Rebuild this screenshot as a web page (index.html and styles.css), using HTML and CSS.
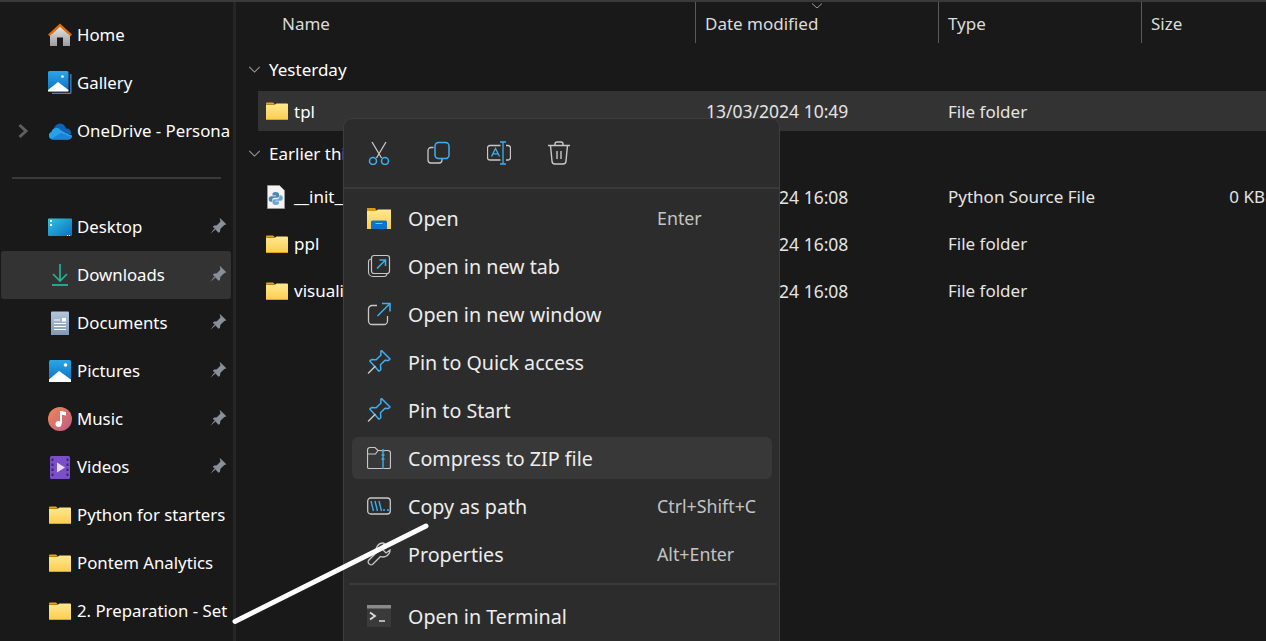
FILE: index.html
```html
<!DOCTYPE html>
<html lang="en">
<head>
<meta charset="utf-8">
<title>File Explorer</title>
<link rel="stylesheet" href="styles.css">
</head>
<body>
<svg class="defs" width="0" height="0" aria-hidden="true">
  <defs>
    <linearGradient id="fg" x1="0" y1="0" x2="0" y2="1"><stop offset="0" stop-color="#ffe98f"/><stop offset="1" stop-color="#fccd50"/></linearGradient>
    <linearGradient id="hg" x1="0" y1="0" x2="0" y2="1"><stop offset="0" stop-color="#e8e8e8"/><stop offset="1" stop-color="#9c9c9c"/></linearGradient>
    <linearGradient id="bg" x1="0" y1="0" x2="0" y2="1"><stop offset="0" stop-color="#2aa7e8"/><stop offset="1" stop-color="#0f6cc0"/></linearGradient>
    <linearGradient id="dg" x1="0" y1="0" x2="1" y2="1"><stop offset="0" stop-color="#2fc5e0"/><stop offset="1" stop-color="#0c6fc0"/></linearGradient>
    <linearGradient id="mg" x1="0" y1="0" x2="1" y2="1"><stop offset="0" stop-color="#ee8a50"/><stop offset="1" stop-color="#c0588a"/></linearGradient>
    <linearGradient id="docg" x1="0" y1="0" x2="0" y2="1"><stop offset="0" stop-color="#b4c6dc"/><stop offset="1" stop-color="#7d97b5"/></linearGradient>
    <symbol id="folder" viewBox="0 0 24 24">
      <path d="M1 4.500a1 1 0 0 1 1-1h6l2.500 2.300H1z" fill="#e8a317"/>
      <path d="M1 6h8.500l2-1.500H22a1 1 0 0 1 1 1V20a.8.8 0 0 1-.8.8H1.800A.8.8 0 0 1 1 20z" fill="url(#fg)"/>
      <path d="M1 20h22v.8H1z" fill="#e8a317"/>
    </symbol>
    <symbol id="pin" viewBox="0 0 18 18">
      <path d="M10.500 1.500 16.500 7.500l-2 .8-3.300 3.200-.5 3-1.200.5-5-5 .5-1.200 3-.5 3.200-3.300z M6 11l-4 5 5-4z" fill="#8a9097"/>
    </symbol>
    <symbol id="pinblue" viewBox="0 0 24 24">
      <path d="M14.500 1.500 23 10l-1.500 1.500-3.500-.3-4.500 4.500.3 5L12 22.300 2.800 12 4.500 10.500l4.700.3 4.800-4.800-.2-3.500z" transform="translate(0 -1)" fill="none" stroke="#3fb0ee" stroke-width="1.500" stroke-linejoin="round"/>
      <path d="M8 16.500 1.500 23" stroke="#c8c8c8" stroke-width="1.500" stroke-linecap="round"/>
    </symbol>
  </defs>
</svg>

<div class="window">
  <nav class="sidebar">
    <div class="nav-row">
      <svg class="nav-icon" viewBox="0 0 24 24"><path d="M2 12 12 3l10 9v11h-7v-8.500H9V23H2z" fill="url(#hg)"/><path d="M0 11.500 12 .5l12 11-1.600 1.800L12 3.800 1.600 13.300z" fill="#e36c0a"/></svg>
      <span class="nav-label">Home</span>
    </div>
    <div class="nav-row">
      <svg class="nav-icon" viewBox="0 0 24 24"><path d="M23.500 3v18.500a1.500 1.500 0 0 1-1.500 1.500H4v-1.300h18.200V3z" fill="#3b86d0"/><rect x="0" y="0" width="20.500" height="20.500" rx="1.500" fill="url(#bg)"/><path d="M0 20.500V19l10-8 10.500 8v1.500z" fill="#fff"/><circle cx="14.500" cy="5.500" r="1.300" fill="#fff"/></svg>
      <span class="nav-label">Gallery</span>
    </div>
    <div class="nav-row">
      <svg class="chevron-right" viewBox="0 0 12 16"><path d="M2.500 2 9 8l-6.500 6" fill="none" stroke="#5f5f5f" stroke-width="3"/></svg>
      <svg class="nav-icon" viewBox="0 0 24 24"><path d="M6 12a6 6 0 0 1 12-2.500 4.500 4.500 0 0 1 5 5.500H6z" fill="#0f62b4"/><path d="M4.500 20.500A4 4 0 0 1 3.500 12.800 5 5 0 0 1 12.500 11l5 3 6.500 2.500a4 4 0 0 1-4 4z" fill="#2aa0e8"/><path d="M3 20 13 14l10.500 4A4 4 0 0 1 20 20.500H5z" fill="#1c84d8"/></svg>
      <span class="nav-label">OneDrive - Persona</span>
    </div>
    <div class="nav-sep"><div class="nav-sep-line"></div></div>
    <div class="nav-row">
      <svg class="nav-icon" viewBox="0 0 24 24"><path d="M1 3.500h22a1 1 0 0 1 1 1V20a1 1 0 0 1-1 1H1a1 1 0 0 1-1-1V4.500a1 1 0 0 1 1-1z" fill="url(#dg)"/><rect x="2" y="5" width="2" height="2" fill="#fff"/><rect x="2" y="9" width="2" height="2" fill="#fff"/><rect x="19" y="20" width="1" height="1" fill="#fff"/><rect x="21" y="20" width="1" height="1" fill="#fff"/></svg>
      <span class="nav-label">Desktop</span>
      <svg class="nav-pin"><use href="#pin"/></svg>
    </div>
    <div class="nav-row nav-row-active">
      <svg class="nav-icon" viewBox="0 0 24 24"><path d="M12 1v16M5 11l7 7 7-7" fill="none" stroke="#1fb597" stroke-width="1.700"/><path d="M4 22h16" stroke="#1fb597" stroke-width="1.800"/></svg>
      <span class="nav-label">Downloads</span>
      <svg class="nav-pin"><use href="#pin"/></svg>
    </div>
    <div class="nav-row">
      <svg class="nav-icon" viewBox="0 0 24 24"><rect x="3" y="0.500" width="18" height="24" rx="1" fill="url(#docg)"/><path d="M6 9h6M6 12.500h12M6 15.500h12M6 18.500h12" stroke="#fff" stroke-width="1"/><rect x="14" y="7" width="4" height="3.500" fill="#fff"/></svg>
      <span class="nav-label">Documents</span>
      <svg class="nav-pin"><use href="#pin"/></svg>
    </div>
    <div class="nav-row">
      <svg class="nav-icon" viewBox="0 0 24 24"><rect x="1" y="1" width="22" height="22" rx="1.500" fill="url(#bg)"/><path d="M1 23v-2.500L11 12l12 8.500V23z" fill="#fff"/><circle cx="17.500" cy="6" r="1.800" fill="#fff"/></svg>
      <span class="nav-label">Pictures</span>
      <svg class="nav-pin"><use href="#pin"/></svg>
    </div>
    <div class="nav-row">
      <svg class="nav-icon" viewBox="0 0 24 24"><circle cx="12" cy="12" r="12" fill="url(#mg)"/><path d="M13 4v12.500" stroke="#fff" stroke-width="2"/><path d="M13 4l5 1v3.500l-5-1z" fill="#fff"/><circle cx="10.500" cy="17" r="3" fill="#fff"/></svg>
      <span class="nav-label">Music</span>
      <svg class="nav-pin"><use href="#pin"/></svg>
    </div>
    <div class="nav-row">
      <svg class="nav-icon" viewBox="0 0 24 24"><rect x="2" y="1" width="20" height="23" rx="1.500" fill="#7a4fc9"/><path d="M3.500 3.500h2v2.500h-2zM3.500 8.500h2V11h-2zM3.500 13.500h2V16h-2zM3.500 18.500h2V21h-2zM18.500 3.500h2v2.500h-2zM18.500 8.500h2V11h-2zM18.500 13.500h2V16h-2zM18.500 18.500h2V21h-2z" fill="#3c2472"/><path d="M9 7.500 17 12.500 9 17.500z" fill="#e9defa"/></svg>
      <span class="nav-label">Videos</span>
      <svg class="nav-pin"><use href="#pin"/></svg>
    </div>
    <div class="nav-row">
      <svg class="nav-icon"><use href="#folder"/></svg>
      <span class="nav-label">Python for starters</span>
    </div>
    <div class="nav-row">
      <svg class="nav-icon"><use href="#folder"/></svg>
      <span class="nav-label">Pontem Analytics</span>
    </div>
    <div class="nav-row">
      <svg class="nav-icon"><use href="#folder"/></svg>
      <span class="nav-label">2. Preparation - Set</span>
    </div>
  </nav>

  <div class="divider"></div>

  <main class="files">
    <div class="col-grid header">
      <div class="head-cell head-name">Name</div>
      <div class="head-cell">Date modified</div>
      <div class="head-cell">Type</div>
      <div class="head-cell">Size</div>
    </div>
    <div class="group group-first">
      <svg class="chevron-down" viewBox="0 0 14 8"><path d="M1 1l6 6 6-6" fill="none" stroke="#9a9a9a" stroke-width="1.200"/></svg>
      <span>Yesterday</span>
    </div>
    <div class="col-grid row row-selected">
      <div class="cell-name"><svg class="file-icon"><use href="#folder"/></svg><span>tpl</span></div>
      <div class="cell cell-date">13/03/2024 10:49</div>
      <div class="cell">File folder</div>
      <div class="cell"></div>
    </div>
    <div class="group">
      <svg class="chevron-down" viewBox="0 0 14 8"><path d="M1 1l6 6 6-6" fill="none" stroke="#9a9a9a" stroke-width="1.200"/></svg>
      <span>Earlier this month</span>
    </div>
    <div class="col-grid row">
      <div class="cell-name">
        <svg class="file-icon" viewBox="0 0 24 24"><path d="M2.500 .5h12l5 5v18h-17z" fill="#f4f4f4" stroke="#9a9a9a" stroke-width=".8"/><path d="M10.500 7C8 7 7.500 8 7.500 9.200V10.500h3.500v.7H6c-1.700 0-2.300 1.500-2.300 2.800S4.300 16.800 6 16.800h1.200V15c0-1.200 1-2.200 2.300-2.200h2.700c1 0 1.800-.8 1.800-1.800V9.200C14 8 13 7 10.500 7z" fill="#4a86b8"/><path d="M11 20c2.500 0 3-1 3-2.200v-1.300h-3.500v-.7h5c1.700 0 2.300-1.500 2.300-2.800s-.6-2.800-2.300-2.800h-1.200V12c0 1.200-1 2.200-2.300 2.200H9.300c-1 0-1.800.8-1.800 1.800v1.800C7.500 19 8.500 20 11 20z" fill="#6aa6d0"/></svg>
        <span>__init__.py</span>
      </div>
      <div class="cell cell-date">13/03/2024 16:08</div>
      <div class="cell">Python Source File</div>
      <div class="cell cell-size">0 KB</div>
    </div>
    <div class="col-grid row">
      <div class="cell-name"><svg class="file-icon"><use href="#folder"/></svg><span>ppl</span></div>
      <div class="cell cell-date">13/03/2024 16:08</div>
      <div class="cell">File folder</div>
      <div class="cell"></div>
    </div>
    <div class="col-grid row">
      <div class="cell-name"><svg class="file-icon"><use href="#folder"/></svg><span>visualisation</span></div>
      <div class="cell cell-date">13/03/2024 16:08</div>
      <div class="cell">File folder</div>
      <div class="cell"></div>
    </div>
  </main>
</div>

<svg class="sort-caret" viewBox="0 0 12 6"><path d="M1 .5 6 5l5-4.500" fill="none" stroke="#9a9a9a" stroke-width="1"/></svg>

<div class="menu">
  <div class="toolbar">
    <div class="tool">
      <svg class="menu-icon" viewBox="0 0 24 24"><path d="M5 1l9.500 16M19 1 9.500 17" fill="none" stroke="#c8c8c8" stroke-width="1.300"/><circle cx="6" cy="20" r="3.500" fill="none" stroke="#3fb0ee" stroke-width="1.500"/><circle cx="18" cy="20" r="3.500" fill="none" stroke="#3fb0ee" stroke-width="1.500"/></svg>
    </div>
    <div class="tool">
      <svg class="menu-icon" viewBox="0 0 24 24"><path d="M6.500 6.500H4a3 3 0 0 0-3 3V19a3 3 0 0 0 3 3h8a3 3 0 0 0 3-3v-1" fill="none" stroke="#c8c8c8" stroke-width="1.300"/><rect x="8" y="1.500" width="14" height="16" rx="3.500" fill="none" stroke="#3fb0ee" stroke-width="1.500"/></svg>
    </div>
    <div class="tool">
      <svg class="menu-icon" viewBox="0 0 24 24"><path d="M13.500 4.500H3a2.500 2.500 0 0 0-2.500 2.500v9.500A2.500 2.500 0 0 0 3 19h10.500M19 4.500h2a2.500 2.500 0 0 1 2.500 2.500v9.500A2.500 2.500 0 0 1 21 19h-2" fill="none" stroke="#c8c8c8" stroke-width="1.300"/><path d="M4.500 15.500 8.500 7.500l4 8M6 12.800h5M13 1h6M16 1v22M13 23h6" fill="none" stroke="#3fb0ee" stroke-width="1.300"/></svg>
    </div>
    <div class="tool">
      <svg class="menu-icon" viewBox="0 0 24 24"><path d="M1 4.500h22M8 4.500V3a2 2 0 0 1 2-2h4a2 2 0 0 1 2 2v1.500M3.500 4.500 5 20a3 3 0 0 0 3 3h8a3 3 0 0 0 3-3l1.500-15.500M10 10v8M14 10v8" fill="none" stroke="#c8c8c8" stroke-width="1.400"/></svg>
    </div>
  </div>
  <div class="menu-list">
    <div class="item">
      <svg class="menu-icon" viewBox="0 0 24 24"><path d="M0 2h8l2 3H0z" fill="#d79a12"/><path d="M0 5h9l2-1.500h13V23H0z" fill="url(#fg)"/><path d="M4 16a1.500 1.500 0 0 1 1.500-1.500h13A1.500 1.500 0 0 1 20 16v7H4z" fill="#0c74c8"/><path d="M8.500 17.500h7" stroke="#7cc4f0" stroke-width="1"/></svg>
      <span class="item-label">Open</span><span class="shortcut">Enter</span>
    </div>
    <div class="item">
      <svg class="menu-icon" viewBox="0 0 24 24"><path d="M4 5a3 3 0 0 0-2.500 3v10A4.500 4.500 0 0 0 6 22.500h11a3 3 0 0 0 3-2.500" fill="none" stroke="#c8c8c8" stroke-width="1.100"/><rect x="4.500" y="1.500" width="18" height="18" rx="2.500" fill="none" stroke="#c8c8c8" stroke-width="1.200"/><path d="M10 14.500 18 6.500M12.500 6h6v6" fill="none" stroke="#3fb0ee" stroke-width="1.500"/></svg>
      <span class="item-label">Open in new tab</span>
    </div>
    <div class="item">
      <svg class="menu-icon" viewBox="0 0 24 24"><path d="M10 3.500H5A3.500 3.500 0 0 0 1.500 7v12A3.500 3.500 0 0 0 5 22.500h12a3.500 3.500 0 0 0 3.500-3.500v-5" fill="none" stroke="#c8c8c8" stroke-width="1.300"/><path d="M10.500 14 22 2.500M15 1.500h8v8" fill="none" stroke="#3fb0ee" stroke-width="1.500"/></svg>
      <span class="item-label">Open in new window</span>
    </div>
    <div class="item">
      <svg class="menu-icon"><use href="#pinblue"/></svg>
      <span class="item-label">Pin to Quick access</span>
    </div>
    <div class="item">
      <svg class="menu-icon"><use href="#pinblue"/></svg>
      <span class="item-label">Pin to Start</span>
    </div>
    <div class="item item-hover">
      <svg class="menu-icon" viewBox="0 0 24 24"><path d="M.5 21V4a2.500 2.500 0 0 1 2.500-2.500h5L11 4.500h10a2.500 2.500 0 0 1 2.500 2.500V21a1.500 1.500 0 0 1-1.500 1.500H2A1.500 1.500 0 0 1 .5 21zM.5 8h8L11 4.500" fill="none" stroke="#c8c8c8" stroke-width="1.200"/><path d="M16 3v20M14.500 5h3M14.500 9h3M14.500 13h3" fill="none" stroke="#3fb0ee" stroke-width="1.400"/></svg>
      <span class="item-label">Compress to ZIP file</span>
    </div>
    <div class="item">
      <svg class="menu-icon" viewBox="0 0 24 24"><rect x=".7" y="1.500" width="22.600" height="16" rx="3" fill="none" stroke="#c8c8c8" stroke-width="1.300" transform="translate(0 2.500)"/><path d="M4 7l2.500 10M8 7l2.500 10M12 7l2.500 10" fill="none" stroke="#3fb0ee" stroke-width="1.400"/><path d="M16 16h2M20 16h2" stroke="#3fb0ee" stroke-width="1.500"/></svg>
      <span class="item-label">Copy as path</span><span class="shortcut">Ctrl+Shift+C</span>
    </div>
    <div class="item">
      <svg class="menu-icon" viewBox="0 0 24 24"><path d="M16 1a7 7 0 0 0-6.500 9.500L1.500 18.500a3 3 0 0 0 4 4l8-8A7 7 0 0 0 23 8l-4 3-5-5 3.500-4.500z" fill="none" stroke="#c8c8c8" stroke-width="1.300"/></svg>
      <span class="item-label">Properties</span><span class="shortcut">Alt+Enter</span>
    </div>
    <div class="menu-sep"></div>
    <div class="item">
      <svg class="menu-icon" viewBox="0 0 24 24"><rect x="0" y="1" width="24" height="22" fill="#3a3a3a"/><rect x="0" y="1" width="24" height="3.500" fill="#8a8a8a"/><path d="M3 8.500 8 12l-5 3.500" fill="none" stroke="#dcdcdc" stroke-width="1.800"/><path d="M12 17h6" stroke="#dcdcdc" stroke-width="1.500"/></svg>
      <span class="item-label">Open in Terminal</span>
    </div>
  </div>
</div>

<svg class="annotation" viewBox="0 0 1266 641"><path d="M235 621.500 426 526" stroke="#fff" stroke-width="5" stroke-linecap="round"/></svg>
</body>
</html>
```
FILE: styles.css
```css
* { box-sizing: border-box; }
html, body { margin: 0; height: 100%; overflow: hidden; background: #191919; }
body { font-family: "Noto Sans", "Open Sans", sans-serif; font-size: 17px; color: #fff; position: relative; }
.defs { position: absolute; }
.window { display: flex; height: 641px; border-top: 2px solid #3a3a3a; overflow: hidden; }

.sidebar { width: 233px; flex: none; padding: 9px 2px 0 1px; overflow: hidden; }
.nav-row { display: flex; align-items: center; height: 48px; padding-left: 47px; position: relative; white-space: nowrap; border-radius: 3px; font-size: 16.800px; }
.nav-row-active { background: #333; }
.nav-icon { width: 24px; height: 24px; flex: none; margin-right: 5px; }
.nav-label { line-height: 24px; }
.nav-pin { width: 20px; height: 20px; position: absolute; left: 207px; top: 13px; }
.chevron-right { width: 12px; height: 16px; position: absolute; left: 16px; top: 16px; }
.nav-sep { height: 48px; display: flex; align-items: center; padding: 0 10px 2px 11px; }
.nav-sep-line { height: 2px; width: 100%; background: #3a3a3a; }

.divider { width: 3px; flex: none; background: #262626; }

.files { flex: 1; min-width: 0; }
.col-grid { display: grid; grid-template-columns: 459px 243px 203px 1fr; }
.header { height: 41px; align-items: stretch; color: #dcdcdc; }
.head-cell { display: flex; align-items: center; padding: 2px 0 0 9px; border-left: 1px solid #5a5a5a; }
.head-name { border-left: none; padding-left: 46px; }

.group { display: flex; align-items: center; padding-left: 12px; gap: 8px; height: 42px; padding-top: 2px; color: #fff; }
.group-first { height: 48px; padding-top: 4px; }
.chevron-down { width: 13px; height: 7px; }

.row { height: 47px; align-items: center; margin-left: 22px; grid-template-columns: 437px 243px 203px 1fr; color: #e4e4e4; white-space: nowrap; }
.row-selected { height: 40px; background: #333; }
.cell-name { display: flex; align-items: center; padding-left: 7px; color: #fff; }
.file-icon { width: 24px; height: 24px; margin-right: 5px; flex: none; }
.cell { padding-left: 10px; }
.cell-date { padding-left: 11px; font-size: 17.500px; }
.cell-size { text-align: right; padding-right: 1px; }

.sort-caret { position: absolute; left: 811px; top: 3px; width: 12px; height: 6px; }

.menu { position: absolute; left: 343px; top: 118px; width: 437px; height: 560px; background: #2c2c2c; border: 1px solid #3d3d3d; border-radius: 9px; color: #ededed; font-size: 19.700px; }
.toolbar { display: flex; height: 70px; padding: 0 0 0 5px; border-bottom: 2px solid #3a3a3a; }
.tool { width: 60px; display: flex; align-items: center; justify-content: center; }
.menu-icon { width: 24px; height: 24px; flex: none; }
.menu-list { display: flex; flex-direction: column; padding-top: 5px; }
.item { display: flex; align-items: center; height: 42px; flex: none; margin: 3px 7px 3px 8px; padding-left: 15px; border-radius: 6px; }
.item-hover { background: #383838; }
.item-label { margin-left: 17px; flex: 1; white-space: nowrap; }
.shortcut { width: 115px; flex: none; font-size: 17.800px; color: #c4c4c4; }
.menu-sep { height: 2px; flex: none; background: #3a3a3a; margin: 5px 2px 7px 5px; }

.annotation { position: absolute; left: 0; top: 0; width: 1266px; height: 641px; pointer-events: none; }
```
